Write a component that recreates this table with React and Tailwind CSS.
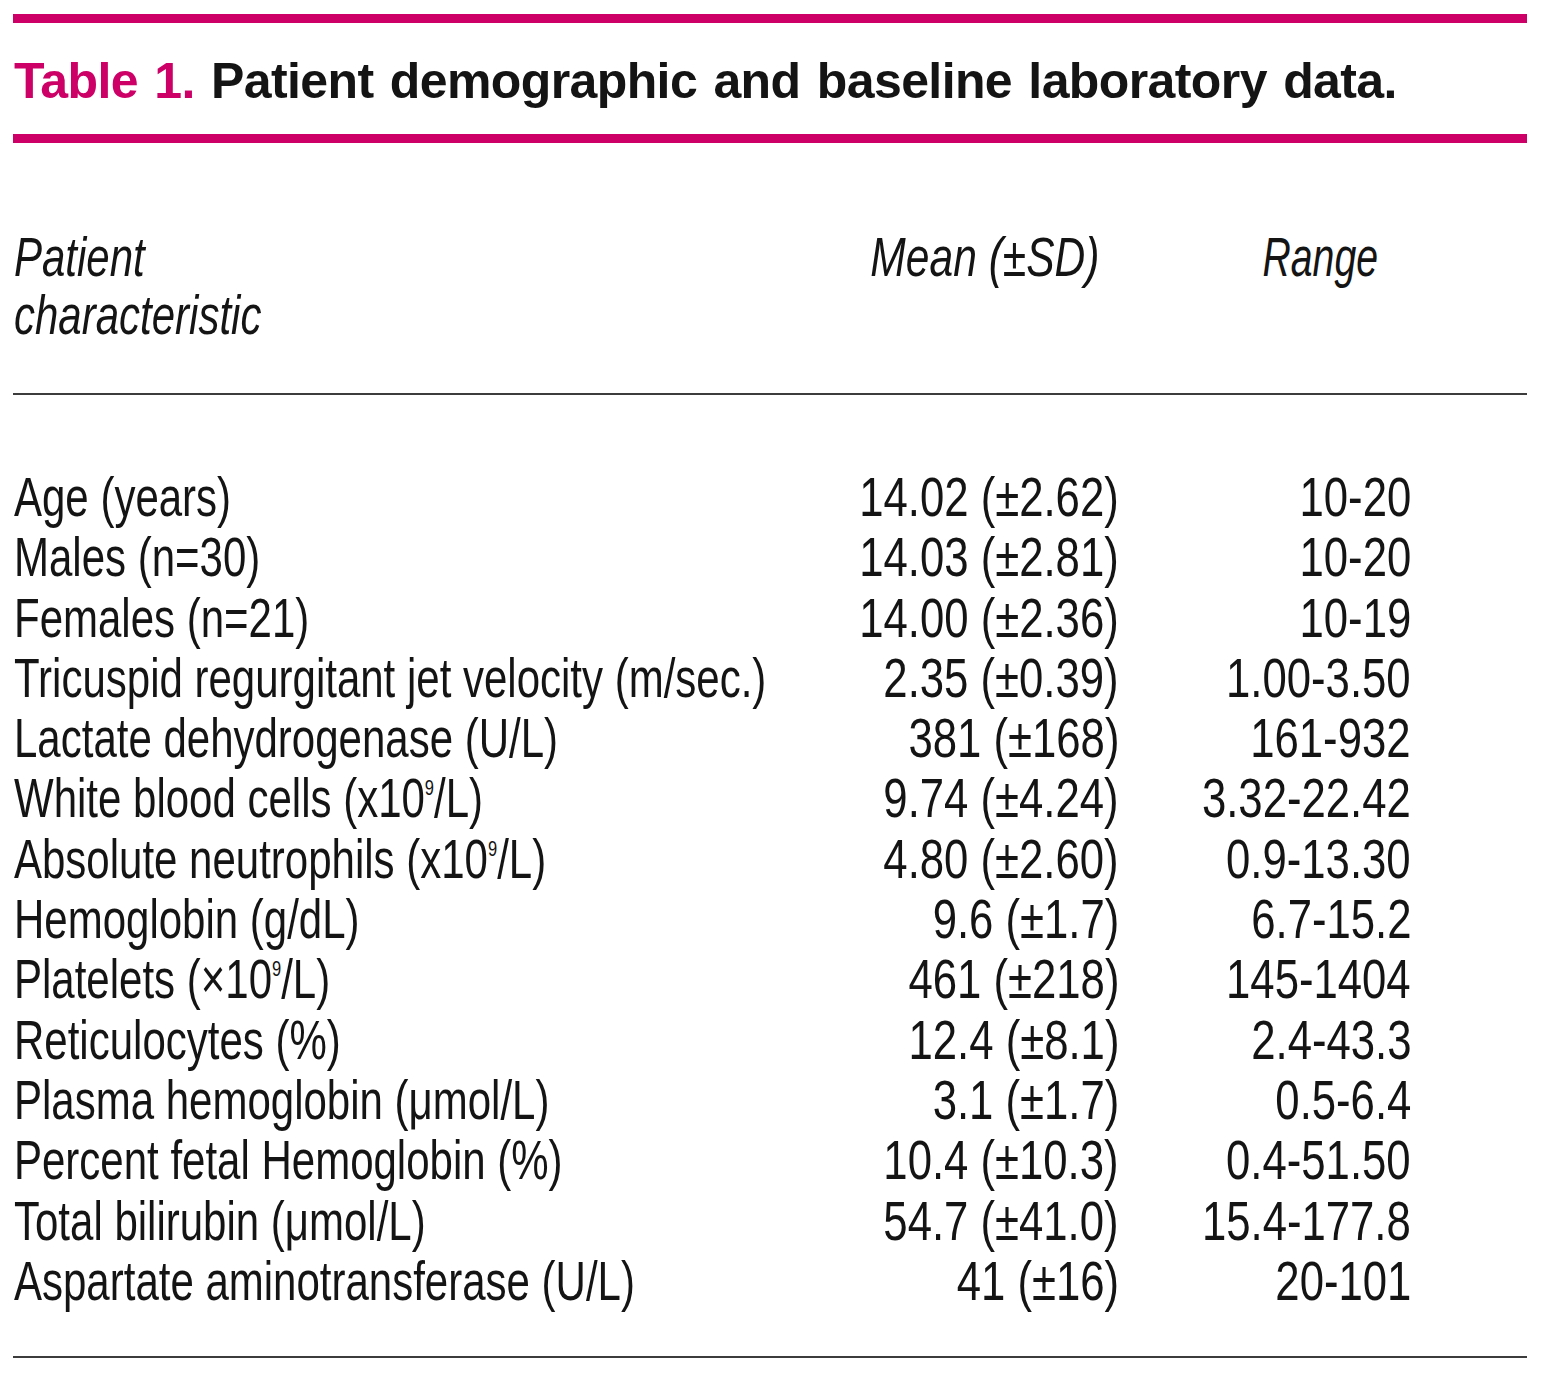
import React from 'react';

const Sup = ({ children }) => (
  <sup className="text-[22px] leading-none -top-[22px]">{children}</sup>
);

const rows = [
  ['Age (years)', '14.02 (±2.62)', '10-20'],
  ['Males (n=30)', '14.03 (±2.81)', '10-20'],
  ['Females (n=21)', '14.00 (±2.36)', '10-19'],
  ['Tricuspid regurgitant jet velocity (m/sec.)', '2.35 (±0.39)', '1.00-3.50'],
  ['Lactate dehydrogenase (U/L)', '381 (±168)', '161-932'],
  [<>White blood cells (x10<Sup>9</Sup>/L)</>, '9.74 (±4.24)', '3.32-22.42'],
  [<>Absolute neutrophils (x10<Sup>9</Sup>/L)</>, '4.80 (±2.60)', '0.9-13.30'],
  ['Hemoglobin (g/dL)', '9.6 (±1.7)', '6.7-15.2'],
  [<>Platelets (×10<Sup>9</Sup>/L)</>, '461 (±218)', '145-1404'],
  ['Reticulocytes (%)', '12.4 (±8.1)', '2.4-43.3'],
  ['Plasma hemoglobin (μmol/L)', '3.1 (±1.7)', '0.5-6.4'],
  ['Percent fetal Hemoglobin (%)', '10.4 (±10.3)', '0.4-51.50'],
  ['Total bilirubin (μmol/L)', '54.7 (±41.0)', '15.4-177.8'],
  ['Aspartate aminotransferase (U/L)', '41 (±16)', '20-101'],
];

function Num({ children }) {
  return (
    <div className="flex justify-end">
      <span className="shrink-0 whitespace-nowrap origin-right scale-x-[0.78]">{children}</span>
    </div>
  );
}

export default function App() {
  return (
    <div className="w-[1548px] min-h-[1389px] bg-white pl-[13px] pr-[21px] pt-[14px] text-[#141414] font-['Liberation_Sans',Arial,sans-serif]">
      <div className="h-[9px] bg-[#cc0066]" />

      <h1 className="mt-[33px] ml-[1px] text-[50px] leading-[50px] font-bold tracking-[-0.6px] [word-spacing:3px] whitespace-nowrap">
        <span className="text-[#cc0066]">Table 1.</span> Patient demographic and baseline laboratory data.
      </h1>

      <div className="mt-[28px] h-[9px] bg-[#cc0066]" />

      {/* column headings */}
      <div className="mt-[85px] grid grid-cols-[828px_278px_292px_1fr] text-[56px] leading-[58px] italic">
        <div className="ml-[1px] whitespace-nowrap origin-left scale-x-[0.75]">
          <div>Patient</div>
          <div>characteristic</div>
        </div>
        <div className="flex justify-end pr-[20px]">
          <span className="shrink-0 whitespace-nowrap origin-right scale-x-[0.76]">Mean (±SD)</span>
        </div>
        <div className="flex justify-end pr-[33px]">
          <span className="shrink-0 whitespace-nowrap origin-right scale-x-[0.7]">Range</span>
        </div>
        <div />
      </div>

      <div className="mt-[49px] h-[2px] bg-[#3c3c3c]" />

      <div className="mt-[72px] grid grid-cols-[828px_278px_292px_1fr] text-[56px] leading-[60.3px]">
        {rows.map(([label, mean, range], i) => (
          <React.Fragment key={i}>
            <div className="ml-[1px] whitespace-nowrap origin-left scale-x-[0.75]">{label}</div>
            <Num>{mean}</Num>
            <Num>{range}</Num>
            <div />
          </React.Fragment>
        ))}
      </div>

      <div className="mt-[45px] h-[2px] bg-[#3c3c3c]" />
    </div>
  );
}
